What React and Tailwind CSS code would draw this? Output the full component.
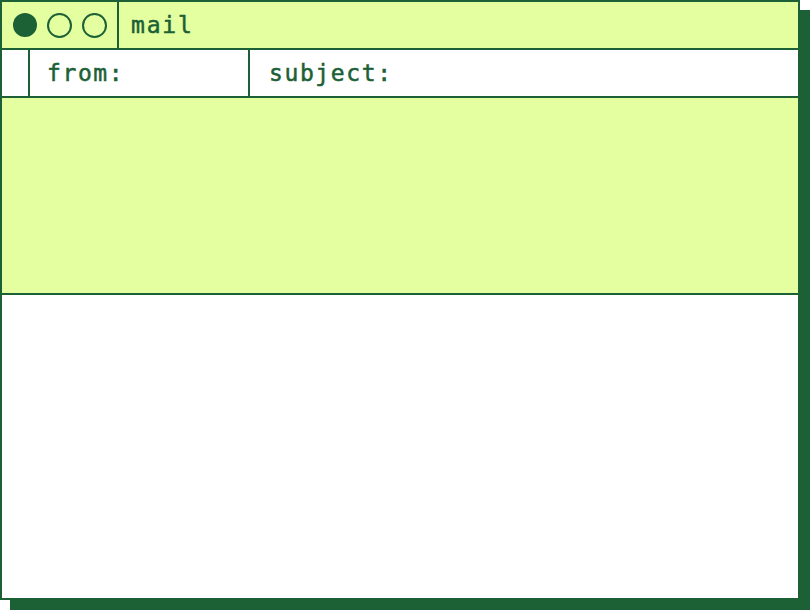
export default function App() {
  const mono = { fontFamily: '"DejaVu Sans Mono", "Liberation Mono", monospace' };
  return (
    <div className="w-[810px] h-[610px] bg-white">
      <div
        className="w-[800px] h-[600px] border-2 border-[#1c6035] bg-white flex flex-col shadow-[10px_10px_0_0_#1c6035] text-[#1c6035]"
        style={mono}
      >
        <div className="h-[48px] flex border-b-2 border-[#1c6035] bg-[#e3ff9f] shrink-0">
          <div className="w-[117px] border-r-2 border-[#1c6035] flex items-center pl-[11px] gap-[10px]">
            <span className="w-[24px] h-[24px] rounded-full bg-[#1c6035]" />
            <span className="w-[25px] h-[25px] rounded-full border-2 border-[#1c6035]" />
            <span className="w-[25px] h-[25px] rounded-full border-2 border-[#1c6035]" />
          </div>
          <div className="flex items-center pl-[12px] text-[23px] tracking-[1.8px] leading-none pt-[1px] [-webkit-text-stroke:0.5px_#1c6035]">mail</div>
        </div>
        <div className="h-[48px] flex border-b-2 border-[#1c6035] bg-white shrink-0">
          <div className="w-[28px] border-r-2 border-[#1c6035]" />
          <div className="w-[220px] border-r-2 border-[#1c6035] flex items-center pl-[17px] text-[23px] tracking-[1.6px] leading-none [-webkit-text-stroke:0.5px_#1c6035]">from:</div>
          <div className="flex items-center pl-[19px] text-[23px] tracking-[1.6px] leading-none [-webkit-text-stroke:0.5px_#1c6035]">subject:</div>
        </div>
        <div className="h-[197px] border-b-2 border-[#1c6035] bg-[#e3ff9f] shrink-0" />
        <div className="flex-1 bg-white" />
      </div>
    </div>
  );
}
